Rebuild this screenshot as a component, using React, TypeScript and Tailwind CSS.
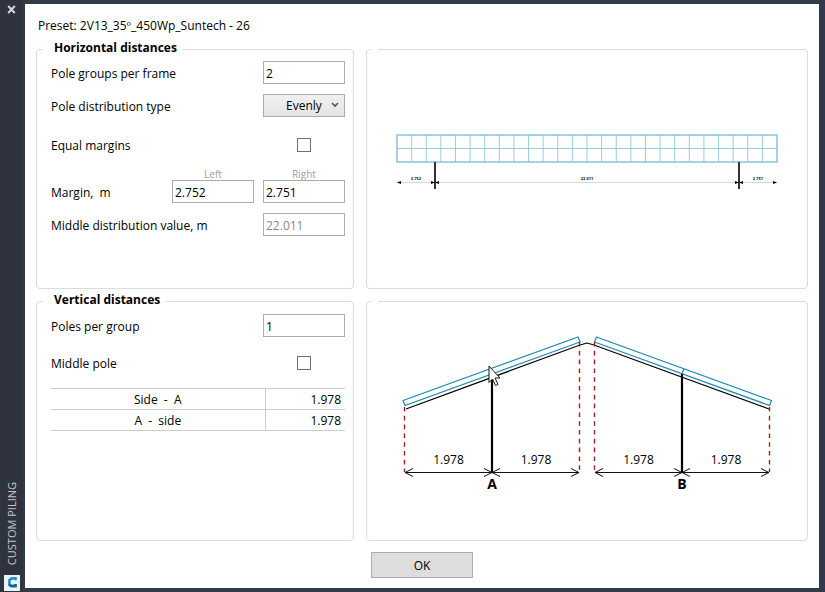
import { useState } from 'react';
import type { ReactNode } from 'react';

interface FieldProps {
  id: string;
  label: string;
  children: ReactNode;
}

interface PanelProps {
  title?: string;
  label?: string;
  children: ReactNode;
}

interface NumberBoxProps {
  id: string;
  value: string;
  disabled?: boolean;
  onChange?: (value: string) => void;
}

const COLUMNS = 26;

const sideDistances = [
  { label: 'Side  -  A', value: '1.978' },
  { label: 'A  -  side', value: '1.978' },
];

function Panel({ title, label, children }: PanelProps) {
  return (
    <fieldset aria-label={label} className="min-w-0 rounded border border-[#d3dfe3] px-0">
      {title ? (
        <legend className="ml-[6px] pr-[6px] pb-[3px] pl-[11px] text-xs leading-4 font-bold">{title}</legend>
      ) : (
        <legend className="ml-[5px] h-[19px] w-[6px]"></legend>
      )}
      {children}
    </fieldset>
  );
}

function Field({ id, label, children }: FieldProps) {
  return (
    <div className="flex h-[23px] items-center justify-between">
      <label htmlFor={id} className="pt-[2px] whitespace-pre">{label}</label>
      {children}
    </div>
  );
}

function NumberBox({ id, value, disabled, onChange }: NumberBoxProps) {
  return (
    <input
      id={id}
      type="text"
      value={value}
      disabled={disabled}
      onChange={(e) => onChange?.(e.target.value)}
      className="h-[23px] w-[82px] border border-[#abadb3] bg-white px-[2px] pt-px text-xs text-black disabled:text-[#8a8a8a]"
    />
  );
}

function CheckBox({ id }: { id: string }) {
  const [checked, setChecked] = useState(false);
  return (
    <div className="flex w-[82px] justify-center">
      <input
        id={id}
        type="checkbox"
        checked={checked}
        onChange={() => setChecked(!checked)}
        className="size-[14px] appearance-none border border-[#707070] bg-white checked:bg-[#707070]"
      />
    </div>
  );
}

function FrontView() {
  const step = 380 / COLUMNS;
  return (
    <svg viewBox="0 0 440 229" className="block w-full" role="img" aria-label="Front view">
      <g stroke="#7fc0d3" fill="none">
        {[...Array(COLUMNS - 1)].map((_, i) => (
          <path key={i} d={`M${30 + step * (i + 1)} 76V103`} strokeWidth="0.8" />
        ))}
        <path d="M30 89.5H410" strokeWidth="0.8" />
        <rect x="30" y="76" width="380" height="27" strokeWidth="1.4" />
      </g>
      <path d="M30 123.5H410" stroke="#cfcfcf" strokeWidth="0.8" />
      <path d="M68 103V130M372 103V130" stroke="#333" strokeWidth="2" />
      <path
        d="M30 123.5l4-1.5v3zM68 123.5l-4-1.5v3zM68 123.5l4-1.5v3zM372 123.5l-4-1.5v3zM372 123.5l4-1.5v3zM410 123.5l-4-1.5v3z"
        fill="#000"
      />
      <g fontSize="4" fontWeight="700" textAnchor="middle" fill="#111">
        <text x="49" y="121">2.752</text>
        <text x="220" y="121">22.011</text>
        <text x="391" y="121">2.751</text>
      </g>
    </svg>
  );
}

function SideView() {
  return (
    <svg viewBox="0 0 440 229" className="block w-full" role="img" aria-label="Side view">
      <path d="M39 98L213 34L220 32L227 34L402 98" fill="none" stroke="#000" strokeWidth="1.2" />
      <g fill="#fff" stroke="#1b8bb0" strokeWidth="1.2">
        <path d="M36 89.5L211 26L213 31L38 94.5z" />
        <path d="M229.5 26L404.5 89.5L402.5 94.5L227.5 31z" />
        <path d="M317 58L315 63" />
      </g>
      <path
        d="M37.5 96V161M212.5 31V161M227.5 31V161M402.5 96V161"
        stroke="#a02020"
        strokeWidth="1.4"
        strokeDasharray="4.6 4.2"
      />
      <path d="M125 69V161M315 63V161" stroke="#000" strokeWidth="2.2" />
      <path
        d="M38 161.5H212M228 161.5H402M46 157.5L38 161.5L46 165.5M117 157.5L125 161.5L117 165.5M133 157.5L125 161.5L133 165.5M204 157.5L212 161.5L204 165.5M236 157.5L228 161.5L236 165.5M307 157.5L315 161.5L307 165.5M323 157.5L315 161.5L323 165.5M394 157.5L402 161.5L394 165.5"
        fill="none"
        stroke="#111"
      />
      <g fontSize="12" textAnchor="middle" fill="#000">
        <text x="81.5" y="153">1.978</text>
        <text x="169" y="153">1.978</text>
        <text x="271.5" y="153">1.978</text>
        <text x="359" y="153">1.978</text>
      </g>
      <g fontSize="14" fontWeight="700" textAnchor="middle" fill="#000">
        <text x="125" y="178">A</text>
        <text x="315" y="178">B</text>
      </g>
      <path d="M122 55V71.5L125.5 68L128.5 74.5L131 73.5L128 67H133z" fill="#fff" stroke="#000" strokeWidth="0.9" />
    </svg>
  );
}

export default function App() {
  const [groups, setGroups] = useState('2');
  const [left, setLeft] = useState('2.752');
  const [right, setRight] = useState('2.751');
  const [poles, setPoles] = useState('1');

  return (
    <div className="flex min-h-screen bg-[#2f3340] font-['Open_Sans','Noto_Sans',sans-serif] text-xs text-black">
      <aside className="flex w-[23px] shrink-0 flex-col items-center justify-between pt-[3px] pb-px">
        <button type="button" aria-label="Close" className="flex h-3 w-4 items-center justify-center">
          <svg viewBox="0 0 9 9" className="size-[9px]">
            <path d="M1.2 1L7.8 8M7.8 1L1.2 8" stroke="#d5d6d9" strokeWidth="2" />
          </svg>
        </button>
        <div className="flex flex-col items-center gap-[10px]">
          <span className="rotate-180 text-[11px] leading-4 text-[#c3c5ca] [writing-mode:vertical-rl]">CUSTOM PILING</span>
          <svg viewBox="0 0 16 16" className="size-4">
            <rect width="16" height="16" fill="#e8f3fa" />
            <path d="M11.5 5.2V3.4H7.6L5.4 5.2V9.6L7 11H11.5V9" fill="none" stroke="#2a8fd0" strokeWidth="2.6" />
            <path d="M5 9.4L7 11H11.5V9" fill="none" stroke="#155f9c" strokeWidth="2.4" />
          </svg>
        </div>
      </aside>

      <main className="min-w-0 flex-1 border-t-4 border-r-6 border-b-4 border-l-2 border-[#323a4a] bg-white px-[11px] pt-[14px] pb-[10px]">
        <h1 className="pl-[2px] leading-4">Preset: 2V13_35º_450Wp_Suntech - 26</h1>

        <div className="mt-[6px] grid auto-rows-[249px] grid-cols-[318px_1fr] gap-x-3 gap-y-[3px]">
          <Panel title="Horizontal distances">
            <div className="flex flex-col pt-[2px] pr-2 pl-[14px]">
              <Field id="groups" label="Pole groups per frame">
                <NumberBox id="groups" value={groups} onChange={setGroups} />
              </Field>
              <div className="mt-[10px]">
                <Field id="distribution" label="Pole distribution type">
                  <div className="relative">
                    <select
                      id="distribution"
                      className="block h-[23px] w-[82px] appearance-none border border-[#acacac] bg-linear-to-b from-[#f0f0f0] to-[#e5e5e5] pl-[22px] text-xs"
                    >
                      <option>Evenly</option>
                      <option>Manual</option>
                    </select>
                    <svg viewBox="0 0 8 6" className="pointer-events-none absolute top-2 right-[6px] h-[6px] w-2">
                      <path d="M1 1L4 4L7 1" fill="none" stroke="#555" strokeWidth="1.6" />
                    </svg>
                  </div>
                </Field>
              </div>
              <div className="mt-4">
                <Field id="equal" label="Equal margins">
                  <CheckBox id="equal" />
                </Field>
              </div>
              <div className="mt-3 flex justify-end gap-[9px] text-center text-[10px] leading-3 text-[#a0a0a0]">
                <label htmlFor="left" className="w-[82px]">Left</label>
                <label htmlFor="right" className="w-[82px]">Right</label>
              </div>
              <Field id="left" label="Margin,  m">
                <div className="flex gap-[9px]">
                  <NumberBox id="left" value={left} onChange={setLeft} />
                  <NumberBox id="right" value={right} onChange={setRight} />
                </div>
              </Field>
              <div className="mt-[10px]">
                <Field id="middle" label="Middle distribution value, m">
                  <NumberBox id="middle" value="22.011" disabled />
                </Field>
              </div>
            </div>
          </Panel>

          <Panel label="Front view">
            <FrontView />
          </Panel>

          <Panel title="Vertical distances">
            <div className="flex flex-col pt-[3px] pr-2 pl-[14px]">
              <Field id="poles" label="Poles per group">
                <NumberBox id="poles" value={poles} onChange={setPoles} />
              </Field>
              <div className="mt-[14px]">
                <Field id="middle-pole" label="Middle pole">
                  <CheckBox id="middle-pole" />
                </Field>
              </div>
              <table className="mt-[14px] w-full border-collapse">
                <tbody>
                  {sideDistances.map((row) => (
                    <tr key={row.label} className="h-[21px] border-y border-[#cdcdcd]">
                      <td className="border-r border-[#cdcdcd] p-0 pt-[2px] text-center leading-4 whitespace-pre">{row.label}</td>
                      <td className="w-20 p-0 pt-[2px] pr-1 text-right leading-4">{row.value}</td>
                    </tr>
                  ))}
                </tbody>
              </table>
            </div>
          </Panel>

          <Panel label="Side view">
            <SideView />
          </Panel>
        </div>

        <div className="mt-[11px] flex justify-center">
          <button type="button" className="h-[26px] w-[102px] border border-[#adadad] bg-[#dddddd] pt-[2px]">OK</button>
        </div>
      </main>
    </div>
  );
}
